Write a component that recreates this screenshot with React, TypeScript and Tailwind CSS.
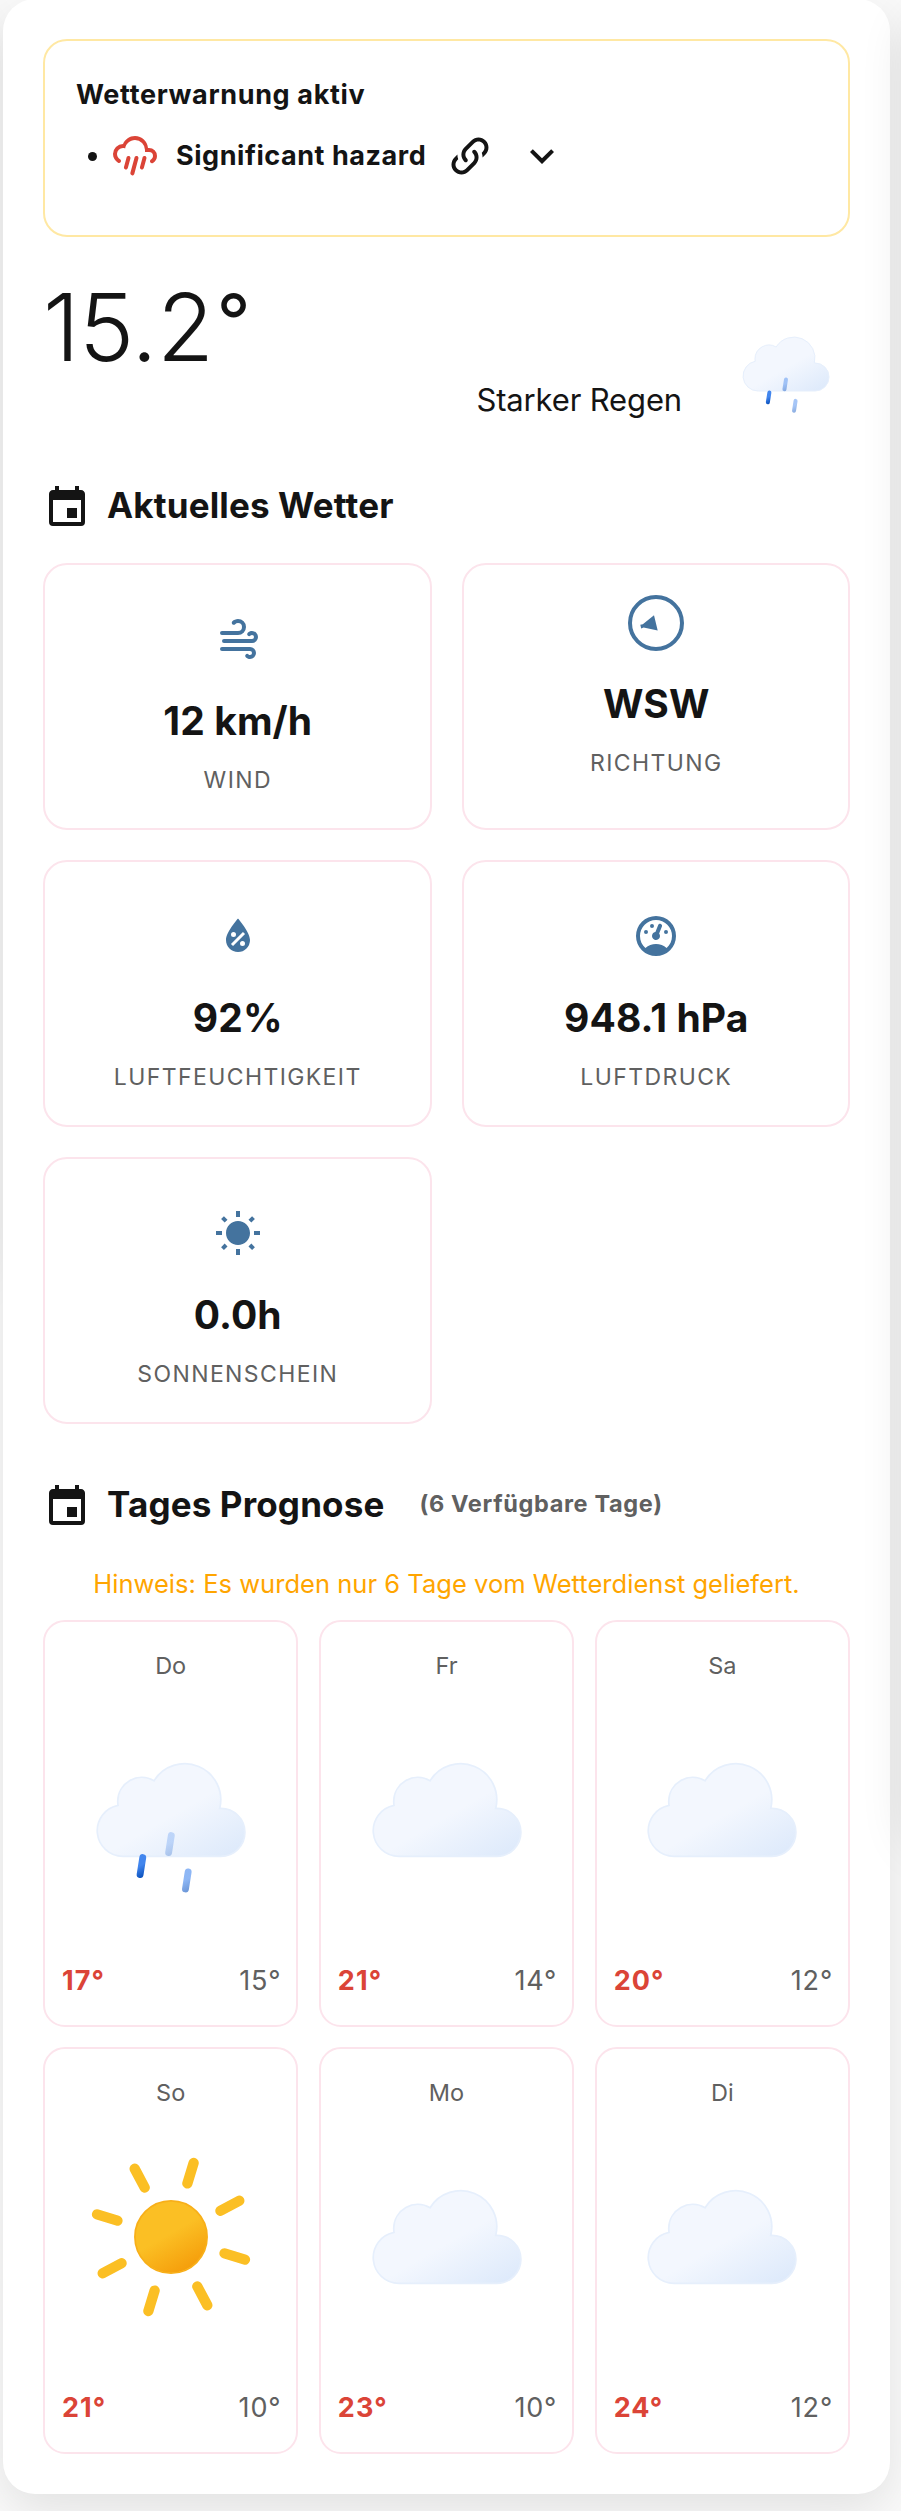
import type { ReactNode } from "react";

const ICONS = {
  pouring:
    "M9,12C9.53,12.14 9.85,12.69 9.71,13.22L8.41,18.05C8.27,18.59 7.72,18.9 7.19,18.76C6.65,18.62 6.34,18.07 6.5,17.54L7.78,12.71C7.92,12.17 8.47,11.86 9,12M13,12C13.53,12.14 13.85,12.69 13.71,13.22L11.64,20.95C11.5,21.5 10.95,21.8 10.41,21.66C9.88,21.5 9.56,20.97 9.7,20.43L11.78,12.71C11.92,12.17 12.47,11.86 13,12M17,12C17.53,12.14 17.85,12.69 17.71,13.22L16.41,18.05C16.27,18.59 15.72,18.9 15.19,18.76C14.65,18.62 14.34,18.07 14.5,17.54L15.78,12.71C15.92,12.17 16.47,11.86 17,12M17,10V9A5,5 0 0,0 12,4C9.5,4 7.45,5.82 7.06,8.19C6.73,8.07 6.37,8 6,8A3,3 0 0,0 3,11C3,12.11 3.6,13.08 4.5,13.6V13.59C5,13.87 5.14,14.5 4.87,14.96C4.59,15.43 4,15.6 3.5,15.32V15.33C2,14.47 1,12.85 1,11A5,5 0 0,1 6,6C7,3.65 9.3,2 12,2C15.43,2 18.24,4.66 18.5,8.03L19,8A4,4 0 0,1 23,12C23,13.5 22.2,14.77 21,15.46V15.46C20.5,15.73 19.91,15.57 19.63,15.09C19.36,14.61 19.5,14 20,13.72V13.72C20.6,13.37 21,12.73 21,12A2,2 0 0,0 19,10H17Z",
  link: "M10.59,13.41C11,13.8 11,14.44 10.59,14.83C10.2,15.22 9.56,15.22 9.17,14.83C7.22,12.88 7.22,9.71 9.17,7.76V7.76L12.71,4.22C14.66,2.27 17.83,2.27 19.78,4.22C21.73,6.17 21.73,9.34 19.78,11.29L18.29,12.78C18.3,11.96 18.17,11.14 17.89,10.36L18.36,9.88C19.54,8.71 19.54,6.81 18.36,5.64C17.19,4.46 15.29,4.46 14.12,5.64L10.59,9.17C9.41,10.34 9.41,12.24 10.59,13.41M13.41,9.17C13.8,8.78 14.44,8.78 14.83,9.17C16.78,11.12 16.78,14.29 14.83,16.24V16.24L11.29,19.78C9.34,21.73 6.17,21.73 4.22,19.78C2.27,17.83 2.27,14.66 4.22,12.71L5.71,11.22C5.7,12.04 5.83,12.86 6.11,13.65L5.64,14.12C4.46,15.29 4.46,17.19 5.64,18.36C6.81,19.54 8.71,19.54 9.88,18.36L13.41,14.83C14.59,13.66 14.59,11.76 13.41,10.59C13,10.2 13,9.56 13.41,9.17Z",
  chevron: "M7.41,8.58L12,13.17L16.59,8.58L18,10L12,16L6,10L7.41,8.58Z",
  calendar:
    "M19,19H5V8H19M16,1V3H8V1H6V3H5C3.89,3 3,3.89 3,5V19A2,2 0 0,0 5,21H19A2,2 0 0,0 21,19V5C21,3.89 20.1,3 19,3H18V1M17,12H12V17H17V12Z",
  wind: "M4,10A1,1 0 0,1 3,9A1,1 0 0,1 4,8H12A2,2 0 0,0 14,6A2,2 0 0,0 12,4C11.45,4 10.95,4.22 10.59,4.59C10.2,5 9.56,5 9.17,4.59C8.78,4.2 8.78,3.56 9.17,3.17C9.9,2.45 10.9,2 12,2A4,4 0 0,1 16,6A4,4 0 0,1 12,10H4M19,12A1,1 0 0,0 20,11A1,1 0 0,0 19,10C18.72,10 18.47,10.11 18.29,10.29C17.9,10.68 17.27,10.68 16.88,10.29C16.5,9.9 16.5,9.27 16.88,8.88C17.42,8.34 18.17,8 19,8A3,3 0 0,1 22,11A3,3 0 0,1 19,14H5A1,1 0 0,1 4,13A1,1 0 0,1 5,12H19M18,18H4A1,1 0 0,1 3,17A1,1 0 0,1 4,16H18A3,3 0 0,1 21,19A3,3 0 0,1 18,22C17.17,22 16.42,21.66 15.88,21.12C15.5,20.73 15.5,20.1 15.88,19.71C16.27,19.32 16.9,19.32 17.29,19.71C17.47,19.89 17.72,20 18,20A1,1 0 0,0 19,19A1,1 0 0,0 18,18Z",
  humidity:
    "M12,3.25C12,3.25 6,10 6,14C6,17.32 8.69,20 12,20A6,6 0 0,0 18,14C18,10 12,3.25 12,3.25M14.47,9.97L15.53,11.03L9.53,17.03L8.47,15.97M9.75,10A1.25,1.25 0 0,1 11,11.25A1.25,1.25 0 0,1 9.75,12.5A1.25,1.25 0 0,1 8.5,11.25A1.25,1.25 0 0,1 9.75,10M14.25,14.5A1.25,1.25 0 0,1 15.5,15.75A1.25,1.25 0 0,1 14.25,17A1.25,1.25 0 0,1 13,15.75A1.25,1.25 0 0,1 14.25,14.5Z",
  gauge:
    "M12,2A10,10 0 0,0 2,12A10,10 0 0,0 12,22A10,10 0 0,0 22,12A10,10 0 0,0 12,2M12,4A8,8 0 0,1 20,12C20,14.4 19,16.5 17.3,18C15.9,16.7 14,16 12,16C10,16 8.2,16.7 6.7,18C5,16.5 4,14.4 4,12A8,8 0 0,1 12,4M14,5.89C13.62,5.9 13.26,6.15 13.1,6.54L11.81,9.77L11.71,10C11,10.13 10.41,10.6 10.14,11.26C9.73,12.29 10.23,13.45 11.26,13.86C12.29,14.27 13.45,13.77 13.86,12.74C14.12,12.08 14,11.32 13.57,10.76L13.67,10.5L14.96,7.29L14.97,7.26C15.17,6.75 14.92,6.17 14.41,5.96C14.28,5.91 14.15,5.89 14,5.89M10,6A1,1 0 0,0 9,7A1,1 0 0,0 10,8A1,1 0 0,0 11,7A1,1 0 0,0 10,6M7,9A1,1 0 0,0 6,10A1,1 0 0,0 7,11A1,1 0 0,0 8,10A1,1 0 0,0 7,9M17,9A1,1 0 0,0 16,10A1,1 0 0,0 17,11A1,1 0 0,0 18,10A1,1 0 0,0 17,9Z",
  sunny:
    "M3.55 19.09L4.96 20.5L6.76 18.71L5.34 17.29M12 6C8.69 6 6 8.69 6 12S8.69 18 12 18 18 15.31 18 12C18 8.68 15.31 6 12 6M20 13H23V11H20M17.24 18.71L19.04 20.5L20.45 19.09L18.66 17.29M20.45 5L19.04 3.6L17.24 5.39L18.66 6.81M13 1H11V4H13M6.76 5.39L4.96 3.6L3.55 5L5.34 6.81L6.76 5.39M1 13H4V11H1M13 20H11V23H13",
};

function Icon({ name, className = "" }: { name: keyof typeof ICONS; className?: string }) {
  return (
    <svg viewBox="0 0 24 24" className={`size-12 shrink-0 fill-current ${className}`}>
      <path fillRule="evenodd" d={ICONS[name]} />
    </svg>
  );
}

type Drop = { x: number; dx: number; dy: number; opacity: number };

function Cloud({ id, drops = [], className }: { id: string; drops?: Drop[]; className: string }) {
  return (
    <svg viewBox="0 0 64 64" fill="none" className={className}>
      <defs>
        <linearGradient id={`${id}-cloud`} x1="22.56" y1="21.96" x2="39.2" y2="50.8" gradientUnits="userSpaceOnUse">
          <stop offset="0" stopColor="#f3f7fe" />
          <stop offset="0.45" stopColor="#f3f7fe" />
          <stop offset="1" stopColor="#deeafb" />
        </linearGradient>
        {drops.map((d) => (
          <linearGradient
            key={d.x}
            id={`${id}-drop-${d.x}`}
            x1={d.x - 1.5}
            y1="42.9"
            x2={d.x + 1.5}
            y2="48.1"
            gradientUnits="userSpaceOnUse"
          >
            <stop offset="0" stopColor="#4286ee" />
            <stop offset="0.45" stopColor="#4286ee" />
            <stop offset="1" stopColor="#0950bc" />
          </linearGradient>
        ))}
      </defs>
      <path
        d="M46.5 31.5h-.32a10.49 10.49 0 00-19.11-8 7 7 0 00-10.57 6 7.21 7.21 0 00.1 1.14A7.5 7.5 0 0018 45.5a4.19 4.19 0 00.5 0v0h28a7 7 0 000-14z"
        fill={`url(#${id}-cloud)`}
        stroke="#e6effc"
        strokeWidth="0.5"
        strokeMiterlimit="10"
      />
      {drops.map((d) => (
        <path
          key={d.x}
          d={`M${d.x + 0.39} 43.03l-.78 4.94`}
          stroke={`url(#${id}-drop-${d.x})`}
          strokeWidth="2"
          strokeLinecap="round"
          opacity={d.opacity}
          transform={`translate(${d.dx} ${d.dy})`}
        />
      ))}
    </svg>
  );
}

function Sun({ className }: { className: string }) {
  return (
    <svg viewBox="0 0 64 64" fill="none" className={className}>
      <defs>
        <linearGradient id="sun-body" x1="26.75" y1="22.91" x2="37.25" y2="41.09" gradientUnits="userSpaceOnUse">
          <stop offset="0" stopColor="#fbbf24" />
          <stop offset="0.45" stopColor="#fbbf24" />
          <stop offset="1" stopColor="#f59e0b" />
        </linearGradient>
      </defs>
      <circle cx="32" cy="32" r="10.5" fill="url(#sun-body)" stroke="#f8af18" strokeWidth="0.5" />
      <path
        d="M32 15.71V9.5M32 54.5v-6.21M43.52 20.48l4.39-4.39M16.09 47.91l4.39-4.39M20.48 20.48l-4.39-4.39M47.91 47.91l-4.39-4.39M15.71 32H9.5M54.5 32h-6.21"
        stroke="#fbbf24"
        strokeWidth="3"
        strokeLinecap="round"
        transform="rotate(17 32 32)"
      />
    </svg>
  );
}

function Compass() {
  return (
    <svg viewBox="0 0 56 56" className="size-14 text-[#44739e]">
      <circle cx="28" cy="28" r="26" fill="none" stroke="currentColor" strokeWidth="4" />
      <path d="M26 20.3L29.7 35.6L15.6 32.4L13.2 33.6L12.3 29.8L14.8 29.2Z" fill="currentColor" />
    </svg>
  );
}

function Metric({ icon, value, label }: { icon: ReactNode; value: string; label: string }) {
  return (
    <div className="flex h-[267px] flex-col items-center rounded-[24px] border-2 border-[#fce4ec] pt-[30px]">
      {icon}
      <div className="mt-[29px] pl-px text-[39px] leading-[48px] font-bold tracking-[0.1px] text-[#141414]">
        {value}
      </div>
      <div className="mt-[21px] pl-px text-[23px] leading-7 tracking-[1.4px] text-[#606060]">{label}</div>
    </div>
  );
}

function MetricIcon({ name }: { name: keyof typeof ICONS }) {
  return (
    <div className="h-[73px] pt-5 pl-px">
      <Icon name={name} className="text-[#44739e]" />
    </div>
  );
}

function SectionTitle({ title, note }: { title: string; note?: string }) {
  return (
    <div className="flex h-12 items-center text-[#141414]">
      <Icon name="calendar" />
      <h2 className="ml-[16px] pb-[6px] text-[35px] leading-[42px] font-bold tracking-[0.15px]">{title}</h2>
      {note && (
        <span className="ml-[35px] pb-[7px] text-[23.5px] leading-8 font-bold tracking-[0.65px] text-[#606060]">
          {note}
        </span>
      )}
    </div>
  );
}

const DAY_DROPS: Drop[] = [
  { x: 24, dx: -0.6, dy: 2.8, opacity: 1 },
  { x: 31, dx: 0.7, dy: -3.6, opacity: 0.28 },
  { x: 38, dx: -1.4, dy: 7, opacity: 0.6 },
];

const NOW_DROPS: Drop[] = [
  { x: 24, dx: -0.7, dy: 3.2, opacity: 1 },
  { x: 31, dx: 0.6, dy: -3.3, opacity: 0.45 },
  { x: 38, dx: -1.6, dy: 7.4, opacity: 0.47 },
];

const DAYS = [
  { day: "Do", kind: "rain", high: 17, low: 15 },
  { day: "Fr", kind: "cloud", high: 21, low: 14 },
  { day: "Sa", kind: "cloud", high: 20, low: 12 },
  { day: "So", kind: "sun", high: 21, low: 10 },
  { day: "Mo", kind: "cloud", high: 23, low: 10 },
  { day: "Di", kind: "cloud", high: 24, low: 12 },
];

export default function App() {
  return (
    <div className="relative h-[2511px] w-[901px] overflow-hidden bg-[#fafafa] pl-[3px] font-['Inter',sans-serif]">
      <div className="absolute top-[-1px] left-[-113px] h-[1270px] w-[100px] rounded-[32px] shadow-[0_16px_48px_rgba(0,0,0,0.1)]" />
      <main className="relative mt-[-1px] h-[2495px] w-[887px] rounded-[32px] bg-white px-10 pt-10 shadow-[0_16px_48px_rgba(0,0,0,0.1)]">
        <section className="h-[198px] rounded-[24px] border-2 border-[#ffe8a3] pt-[38px] pl-[31px] text-[#141414]">
          <h3 className="text-[27px] leading-8 font-bold tracking-[0.65px]">Wetterwarnung aktiv</h3>
          <div className="mt-[21px] flex h-12 items-center pl-[12px]">
            <span className="size-[9px] rounded-full bg-[#141414]" />
            <Icon name="pouring" className="ml-[14px] text-[#db4437]" />
            <span className="ml-[17px] w-[250px] text-[27px] leading-8 font-bold tracking-[0.55px] whitespace-nowrap">
              Significant hazard
            </span>
            <Icon name="link" className="ml-5" />
            <Icon name="chevron" className="ml-6" />
          </div>
        </section>

        <section className="flex h-[247px] text-[#141414]">
          <div className="pt-[34px] text-[93px] leading-[112px] font-light tracking-[-0.5px]">
            15.2<span className="ml-[3px] align-[13px] text-[75px] leading-none font-normal">°</span>
          </div>
          <div className="ml-auto flex pt-[63px]">
            <span className="mt-[80px] mr-[40px] text-[31px] leading-[40px] tracking-[-0.15px]">Starker Regen</span>
            <Cloud id="now" drops={NOW_DROPS} className="size-32" />
          </div>
        </section>

        <SectionTitle title="Aktuelles Wetter" />
        <section className="mt-[31px] grid grid-cols-2 gap-[30px]">
          <Metric icon={<MetricIcon name="wind" />} value="12 km/h" label="WIND" />
          <Metric icon={<Compass />} value="WSW" label="RICHTUNG" />
          <Metric icon={<MetricIcon name="humidity" />} value="92%" label="LUFTFEUCHTIGKEIT" />
          <Metric icon={<MetricIcon name="gauge" />} value="948.1 hPa" label="LUFTDRUCK" />
          <Metric icon={<MetricIcon name="sunny" />} value="0.0h" label="SONNENSCHEIN" />
        </section>

        <div className="mt-[59px]">
          <SectionTitle title="Tages Prognose" note="(6 Verfügbare Tage)" />
        </div>
        <p className="mt-[37px] text-center text-[25.5px] leading-8 tracking-[0.03px] text-[#ffa500]">
          Hinweis: Es wurden nur 6 Tage vom Wetterdienst geliefert.
        </p>
        <section className="mt-5 grid grid-cols-3 gap-x-[20.5px] gap-y-[20px]">
          {DAYS.map((d) => (
            <div key={d.day} className="flex h-[407px] flex-col rounded-[22px] border-2 border-[#fce4ec] px-4 pt-[30px]">
              <div className="text-center text-[23.5px] leading-7 text-[#606060]">{d.day}</div>
              <div className="mt-5 flex justify-center">
                {d.kind === "sun" ? (
                  <Sun className="size-[220px] shrink-0" />
                ) : (
                  <Cloud id={d.day} drops={d.kind === "rain" ? DAY_DROPS : []} className="size-[220px] shrink-0" />
                )}
              </div>
              <div className="mt-[45px] -mr-px flex justify-between pl-px text-[27px] leading-8 text-[#606060]">
                <span className="font-bold tracking-[1.1px] text-[#db4437]">{d.high}°</span>
                <span className="tracking-[0.8px]">{d.low}°</span>
              </div>
            </div>
          ))}
        </section>
      </main>
      <div className="absolute top-[-1px] left-[906px] h-[1836px] w-[100px] rounded-[32px] shadow-[0_16px_48px_rgba(0,0,0,0.1)]" />
    </div>
  );
}
